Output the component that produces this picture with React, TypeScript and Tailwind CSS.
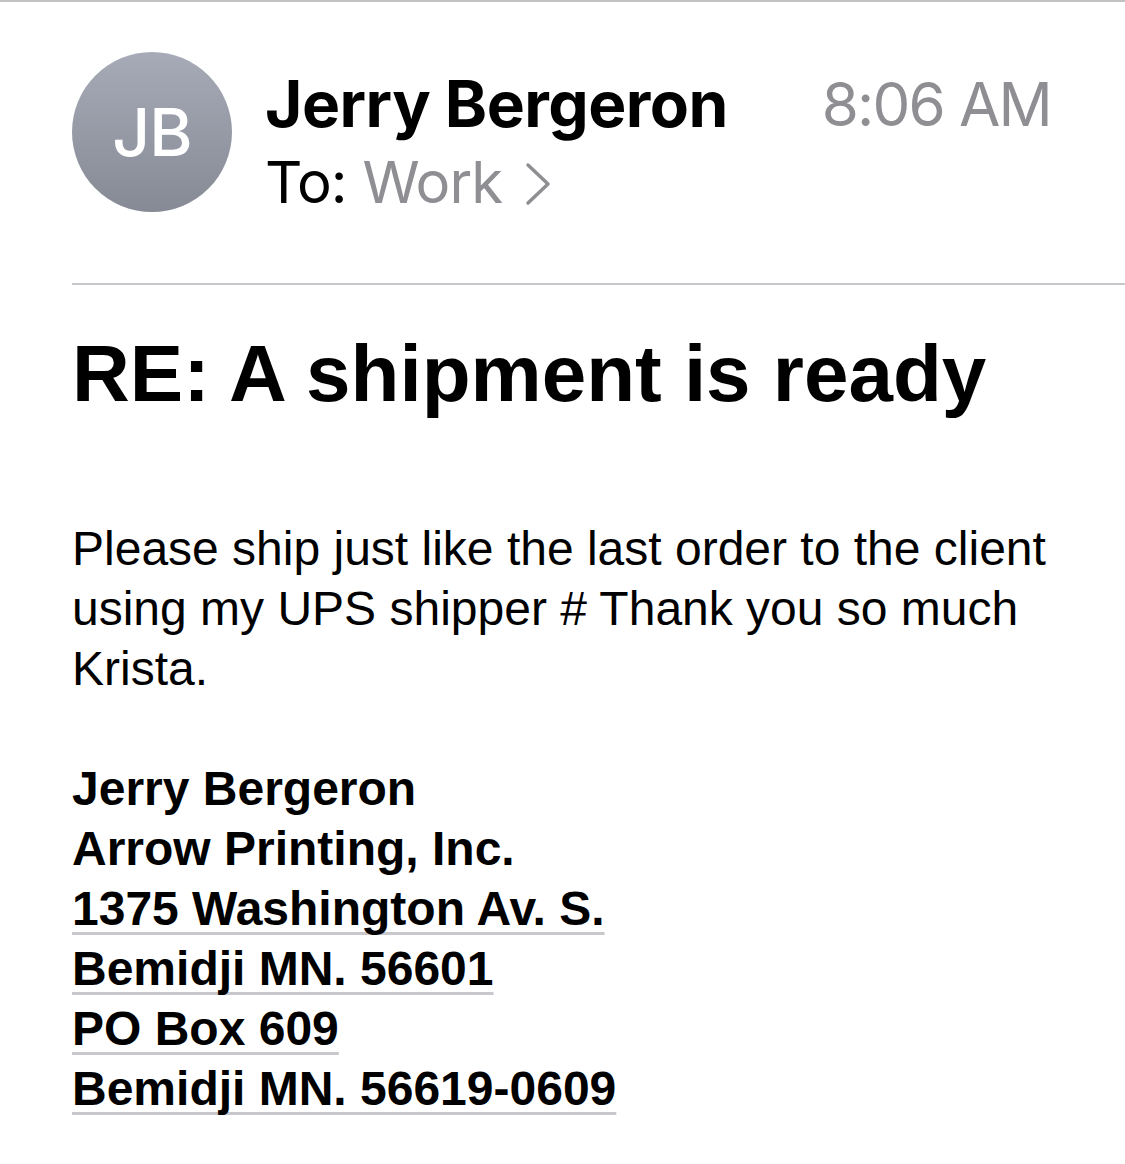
import React from 'react';

const addressLines = [
  '1375 Washington Av. S.',
  'Bemidji MN. 56601',
  'PO Box 609',
  'Bemidji MN. 56619-0609',
];

const Chevron = () => (
  <svg width="28" height="44" viewBox="0 0 28 44" fill="none" className="ml-[22px] mt-[4px]">
    <path d="M4 3 L24 22 L4 41" stroke="#8e8e93" strokeWidth="3.5" strokeLinecap="round" strokeLinejoin="round" />
  </svg>
);

export default function App() {
  return (
    <div className="min-h-screen w-full bg-white text-black font-['Liberation_Sans',Arial,sans-serif]">
      {/* top edge */}
      <div className="h-[2px] w-full bg-[#c2c2c2]" />

      {/* Header */}
      <div className="flex pl-[72px] pr-[74px] pt-[50px] font-['Inter',sans-serif]">
        <div className="w-[160px] h-[160px] shrink-0 rounded-full bg-linear-to-b from-[#a6abb7] to-[#858a95] flex items-center justify-center">
          <span className="text-white text-[66px] font-medium tracking-[-1px] leading-none">JB</span>
        </div>
        <div className="flex-1 ml-[33px]">
          <div className="flex justify-between items-start mt-[16px]">
            <span className="text-[64px] font-bold leading-[72px] tracking-[-0.5px]">Jerry Bergeron</span>
            <span className="text-[60px] leading-[72px] text-[#8e8e93] tracking-[-1.8px]">8:06 AM</span>
          </div>
          <div className="flex items-center mt-[10px] text-[58px] leading-[64px] tracking-[-1px]">
            <span>To:</span>
            <span className="ml-[16px] text-[#8e8e93]">Work</span>
            <Chevron />
          </div>
        </div>
      </div>

      <div className="ml-[72px] mt-[69px] h-[2px] bg-[#c8c8cc]" />

      {/* Message */}
      <div className="px-[72px]">
        <h1 className="mt-[41px] text-[80px] font-bold leading-[96px]">RE: A shipment is ready</h1>

        <p className="mt-[97px] text-[48px] leading-[60px]">
          Please ship just like the last order to the client
          <br />
          using my UPS shipper # Thank you so much
          <br />
          Krista.
        </p>

        <div className="mt-[60px] text-[48px] font-bold leading-[60px]">
          <div>Jerry Bergeron</div>
          <div>Arrow Printing, Inc.</div>
          {addressLines.map((line) => (
            <div key={line}>
              <span className="underline decoration-[#c8c8cc] decoration-[3px] underline-offset-[7px] [text-decoration-skip-ink:none]">
                {line}
              </span>
            </div>
          ))}
        </div>
      </div>
    </div>
  );
}
